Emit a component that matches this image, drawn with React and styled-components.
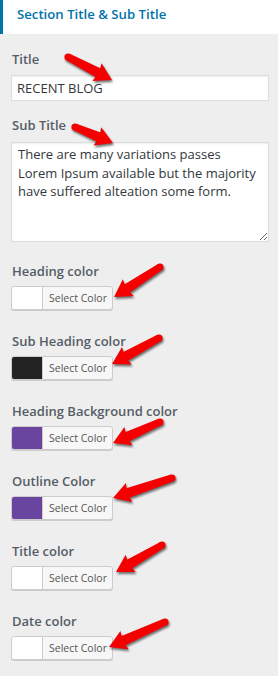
import React from 'react';
import styled, { createGlobalStyle } from 'styled-components';

const GlobalStyle = createGlobalStyle`
  body {
    margin: 0;
    background: #eeeeee;
    font-family: "Open Sans", "Liberation Sans", sans-serif;
  }
`;

const Panel = styled.div`
  width: 278px;
  min-height: 676px;
  background: #eeeeee;
  overflow: hidden;
`;

/* section header */
const Header = styled.div`
  height: 34px;
  box-sizing: border-box;
  padding: 6px 0 0 14px;
  background: #ffffff;
  border-left: 3px solid #0073aa;
  color: #0073aa;
  font-size: 13.2px;
  font-weight: 600;
  line-height: 16px;
`;

const Content = styled.div`
  padding: 17px 9px 0 11px;
`;

const Field = styled.div`
  position: relative;
  margin-bottom: ${(props) => props.$gap}px;
`;

const Label = styled.div`
  color: #555d66;
  font-size: 13px;
  font-weight: 600;
  line-height: 16px;
  margin-bottom: ${(props) => props.$gap}px;
  padding-left: 1px;
`;

const TextInput = styled.input`
  display: block;
  box-sizing: border-box;
  width: 100%;
  height: 26px;
  margin: 0;
  padding: 0 5px;
  border: 1px solid #dddddd;
  box-shadow: inset 0 1px 2px rgba(0, 0, 0, 0.07);
  background: #ffffff;
  color: #32373c;
  font-family: inherit;
  font-size: 13px;
  outline: none;
`;

const TextArea = styled.textarea`
  display: block;
  box-sizing: border-box;
  width: 100%;
  height: 100px;
  margin: 0;
  padding: 2px 6px;
  border: 1px solid #dddddd;
  box-shadow: inset 0 1px 2px rgba(0, 0, 0, 0.07);
  background: #ffffff;
  color: #32373c;
  font-family: inherit;
  font-size: 13px;
  line-height: 18.6px;
  outline: none;
`;

/* colour picker button */
const ColorButton = styled.div`
  display: flex;
  width: 102px;
  height: 24px;
  box-sizing: border-box;
  border: 1px solid #cccccc;
  border-radius: 3px;
  box-shadow: 0 1px 0 #cccccc;
  background: #f7f7f7;
  overflow: hidden;
`;

const Swatch = styled.span`
  width: 30px;
  flex: none;
  background: ${(props) => props.$color};
  border-right: 1px solid #cccccc;
`;

const ButtonText = styled.span`
  flex: 1;
  display: flex;
  align-items: center;
  justify-content: center;
  color: #555555;
  font-size: 10.5px;
  padding-left: 1px;
`;

/* red annotation arrows */
const ArrowSvg = styled.svg`
  position: absolute;
  left: -11px;
  top: 0;
  overflow: visible;
  pointer-events: none;
  filter: drop-shadow(1px 2px 1px rgba(0, 0, 0, 0.55));
`;

const pt = (x, y) => `${x.toFixed(1)},${y.toFixed(1)}`;

const Arrow = ({ from, to }) => {
  const [fx, fy] = from;
  const [tx, ty] = to;
  const len = Math.hypot(tx - fx, ty - fy);
  const ux = (tx - fx) / len;
  const uy = (ty - fy) / len;
  const nx = -uy;
  const ny = ux;
  const head = 17;
  const half = 10;
  const bx = tx - ux * head;
  const by = ty - uy * head;
  const shaft = [
    pt(fx + nx * 3.6, fy + ny * 3.6),
    pt(bx + ux * 3 + nx * 5, by + uy * 3 + ny * 5),
    pt(bx + ux * 3 - nx * 5, by + uy * 3 - ny * 5),
    pt(fx - nx * 3.6, fy - ny * 3.6),
  ].join(' ');
  const tip = [
    pt(tx, ty),
    pt(bx + nx * half, by + ny * half),
    pt(bx + ux * 2, by + uy * 2),
    pt(bx - nx * half, by - ny * half),
  ].join(' ');
  return (
    <ArrowSvg width="1" height="1">
      <circle cx={fx} cy={fy} r="3.6" fill="#f40000" />
      <polygon points={shaft} fill="#f40000" />
      <polygon points={tip} fill="#f40000" />
    </ArrowSvg>
  );
};

const colorFields = [
  { label: 'Heading color', color: '#ffffff', from: [160, 4], to: [114, 34] },
  { label: 'Sub Heading color', color: '#222222', from: [159, 5], to: [112, 31] },
  { label: 'Heading Background color', color: '#6a45a0', from: [160, 19], to: [113, 40] },
  { label: 'Outline Color', color: '#6a45a0', from: [172, 5], to: [113, 25] },
  { label: 'Title color', color: '#ffffff', from: [162, 2], to: [116, 29] },
  { label: 'Date color', color: '#ffffff', from: [165, 9], to: [109, 34] },
];

const App = () => {
  return (
    <Panel>
      <GlobalStyle />
      <Header>Section Title &amp; Sub Title</Header>
      <Content>
        <Field $gap={16}>
          <Label $gap={8}>Title</Label>
          <TextInput readOnly value="RECENT BLOG" />
          <Arrow from={[68, 6]} to={[112, 29]} />
        </Field>
        <Field $gap={21}>
          <Label $gap={9}>Sub Title</Label>
          <TextArea
            readOnly
            value="There are many variations passes Lorem Ipsum available but the majority have suffered alteation some form."
          />
          <Arrow from={[75, 10]} to={[113, 26]} />
        </Field>
        {colorFields.map((f) => (
          <Field key={f.label} $gap={23}>
            <Label $gap={7}>{f.label}</Label>
            <ColorButton>
              <Swatch $color={f.color} />
              <ButtonText>Select Color</ButtonText>
            </ColorButton>
            <Arrow from={f.from} to={f.to} />
          </Field>
        ))}
      </Content>
    </Panel>
  );
};

export default App;
